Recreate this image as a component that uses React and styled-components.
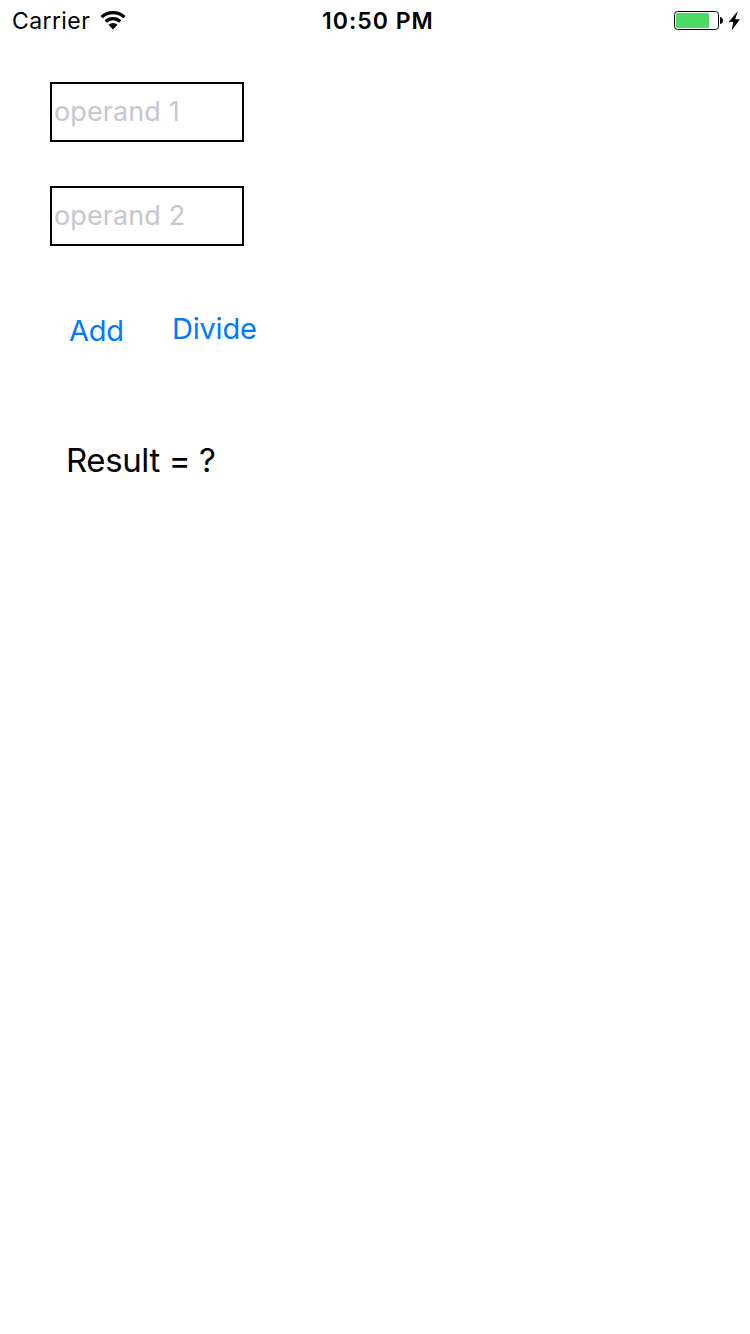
import React from 'react';
import styled, { createGlobalStyle } from 'styled-components';

const Global = createGlobalStyle`
  * { box-sizing: border-box; }
  body { margin: 0; background: #fff; font-family: Inter, "Liberation Sans", sans-serif; color: #000; }
`;
const Screen = styled.main`
  width: 750px; height: 1334px; background: #fff; overflow: hidden;
`;
const StatusBar = styled.header`
  height: 41px; padding: 0 10px 0 12px;
  display: grid; grid-template-columns: 310px auto 1fr; align-items: center;
`;
const StatusGroup = styled.div`
  display: flex; align-items: center; gap: ${p => p.$gap}px;
  justify-content: ${p => (p.$end ? 'flex-end' : 'flex-start')};
`;
const Label = styled.span`
  display: block; white-space: nowrap;
  font-size: ${p => p.$size}px; line-height: 40px;
  font-weight: ${p => p.$weight || 400};
  letter-spacing: ${p => p.$spacing || 0}px;
`;
const Form = styled.section`
  display: flex; flex-direction: column; align-items: flex-start;
  padding: 41px 50px 0;
`;
const Operand = styled.input`
  display: block; width: 194px; height: 60px; margin: 0 0 44px; padding: 0 2px 2px;
  border: 2px solid #000; border-radius: 0; outline: none; background: #fff;
  font: 400 27px Inter, "Liberation Sans", sans-serif; letter-spacing: 0.1px;
  &::placeholder { color: #c7c7cd; opacity: 1; }
`;
const Actions = styled.div`
  display: flex; align-items: flex-start; gap: 48px; padding: 19px 0 0 19px;
`;
const Action = styled.button`
  margin: ${p => p.$top || 0}px 0 0; padding: 0; border: 0; background: none; color: #007aff;
  font: 400 29px/40px Inter, "Liberation Sans", sans-serif; letter-spacing: -0.2px;
`;
const Result = styled.output`
  display: block; margin: 89px 0 0 16px; white-space: nowrap;
  font-size: 33px; line-height: 40px; letter-spacing: -0.4px;
`;

const Wifi = () => (
  <svg width="26" height="19" viewBox="0 0 26 19" aria-hidden="true">
    <g fill="none" stroke="#000" strokeWidth="3.2">
      <path d="M1.6 6.2a16.500 16.500 0 0 1 22.800 0" />
      <path d="M5.7 10.500a10.500 10.500 0 0 1 14.600 0" />
    </g>
    <path d="M8.500 13.800a6.300 6.300 0 0 1 9 0L13 18.500z" />
  </svg>
);
const Battery = () => (
  <svg width="50" height="20" viewBox="0 0 50 20" aria-hidden="true">
    <rect x="1.5" y=".5" width="44" height="18" rx="3" fill="#fff" stroke="#000" />
    <rect x="3" y="2" width="33" height="15" rx="1" fill="#4cd964" />
    <path d="M47 6c4 .3 4 6.700 0 7z" />
  </svg>
);
const Bolt = () => (
  <svg width="12" height="20" viewBox="0 0 12 20" aria-hidden="true">
    <path d="M9.800 0 .7 11h4.700L3.600 19.500 12 8.300H7.200z" />
  </svg>
);

export default function App() {
  return (
    <Screen>
      <Global />
      <StatusBar>
        <StatusGroup $gap={9.5}><Label $size={23} $spacing={0.4}>Carrier</Label><Wifi /></StatusGroup>
        <Label $size={23} $weight={600} $spacing={1}>10:50 PM</Label>
        <StatusGroup $gap={5} $end><Battery /><Bolt /></StatusGroup>
      </StatusBar>
      <Form>
        <Operand placeholder="operand 1" />
        <Operand placeholder="operand 2" />
        <Actions><Action $top={2}>Add</Action><Action>Divide</Action></Actions>
        <Result>Result = ?</Result>
      </Form>
    </Screen>
  );
}
